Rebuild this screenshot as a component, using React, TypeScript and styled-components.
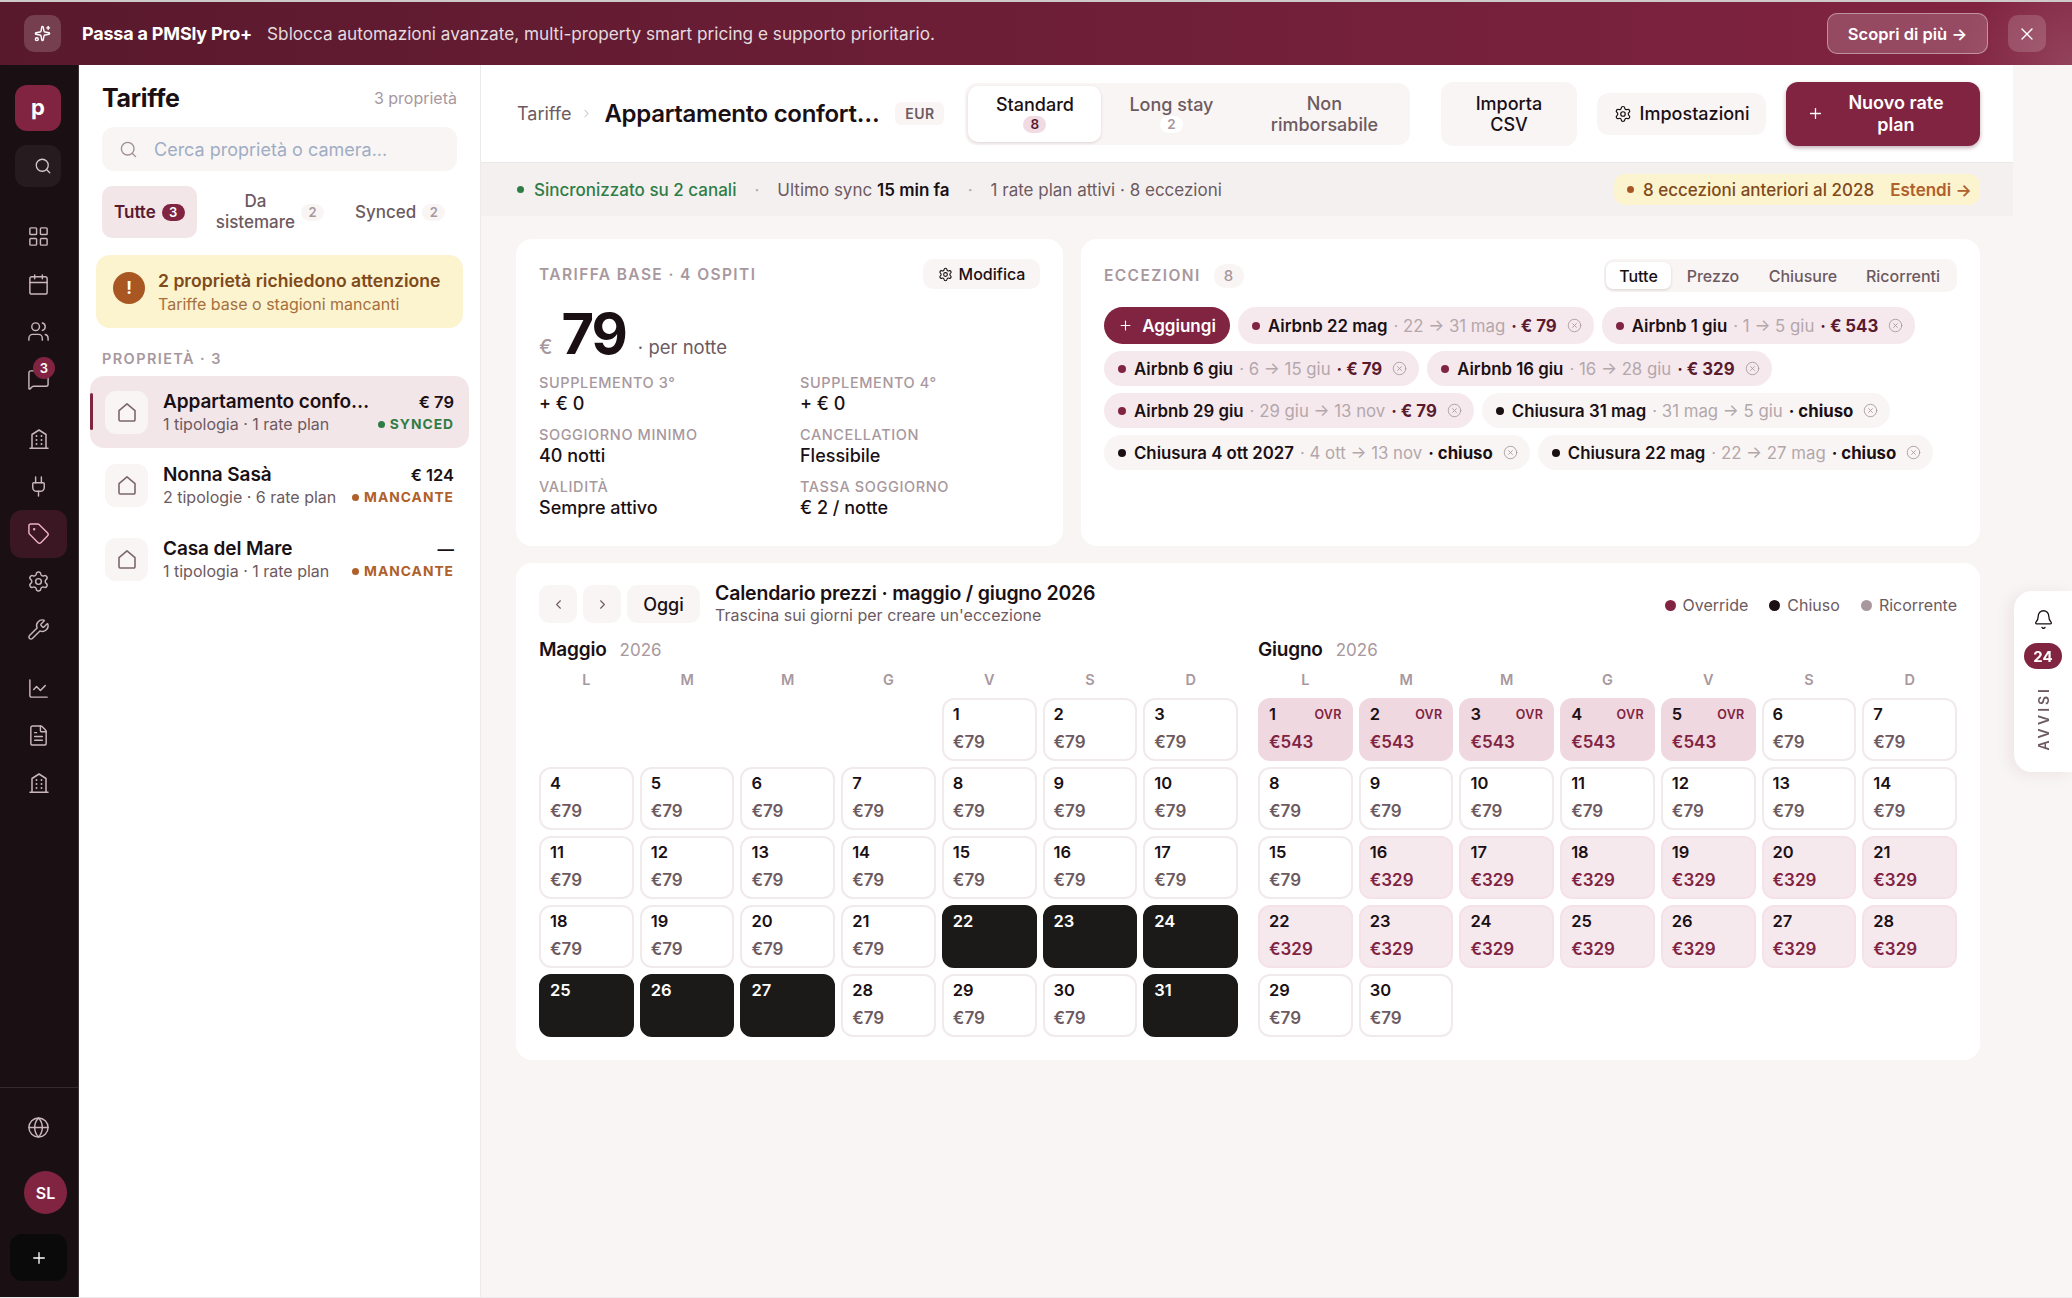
import { ReactNode } from "react";
import styled, { createGlobalStyle } from "styled-components";
import {
  Bell, Calendar, ChartLine, ChevronLeft, ChevronRight, CircleX, FileText, Globe, LayoutGrid,
  MessageSquare, Plug, Plus, Search, Settings, Sparkles, Tag, Users, Wrench, X,
} from "lucide-react";

const wine = "#802442";
const deepWine = "#5a1a2e";
const ink = "#1a1014";
const soft = "#6d5a60";
const muted = "#a8989e";
const paper = "#f9f5f4";
const blush = "#f3e6e9";

const GlobalStyle = createGlobalStyle`
  html, body, #root { height: 100%; margin: 0; }
  body { font-family: Inter, "Liberation Sans", sans-serif; color: ${ink}; background: #fff; overflow: hidden; }
  * { box-sizing: border-box; }
`;

const Root = styled.div`
  height: 100vh;
  display: flex;
  flex-direction: column;
  border-top: 2px solid #cfcaca;
  border-bottom: 1px solid #eee9ea;
`;

/* banner */
const Banner = styled.div`
  height: 63px;
  flex: none;
  display: flex;
  align-items: center;
  padding: 0 26px 0 24px;
  color: #fff;
  background:
    radial-gradient(circle at 100% 100%, rgba(255,255,255,.14), rgba(255,255,255,0) 110px),
    linear-gradient(90deg, #59192d, #822442);
`;
const BannerIcon = styled.div`
  width: 37px;
  height: 37px;
  border-radius: 10px;
  background: rgba(255,255,255,.17);
  display: flex;
  align-items: center;
  justify-content: center;
  margin-right: 21px;
`;
const BannerTitle = styled.span`
  font-size: 18px;
  font-weight: 700;
  margin-right: 15px;
  letter-spacing: -.2px;
`;
const BannerText = styled.span`
  font-size: 17.2px;
  color: rgba(255,255,255,.85);
`;
const BannerCta = styled.button`
  margin-left: auto;
  width: 161px;
  height: 41px;
  border-radius: 10px;
  border: 1.5px solid rgba(255,255,255,.4);
  background: rgba(255,255,255,.18);
  color: #fff;
  font: 600 16.5px Inter, sans-serif;
`;
const BannerClose = styled.button`
  margin-left: 20px;
  width: 38px;
  height: 37px;
  border: 0;
  border-radius: 10px;
  background: rgba(255,255,255,.16);
  color: #fff;
  display: flex;
  align-items: center;
  justify-content: center;
`;

const Body = styled.div`
  flex: 1;
  min-height: 0;
  display: flex;
`;

/* icon rail */
const Rail = styled.nav`
  width: 79px;
  flex: none;
  background: #1a1014;
  border-right: 1px solid #3b3236;
  display: flex;
  flex-direction: column;
  color: #c9b6bc;
  padding-top: 20px;
`;
const RailLogo = styled.div`
  width: 46px;
  height: 46px;
  margin: 0 0 14px 15px;
  border-radius: 12px;
  background: ${wine};
  color: #fff;
  font-size: 22px;
  font-weight: 700;
  display: flex;
  align-items: center;
  justify-content: center;
  padding-bottom: 3px;
`;
const RailSearch = styled.div`
  width: 46px;
  height: 42px;
  margin: 0 0 26px 15px;
  border-radius: 12px;
  background: #261c20;
  color: #d7c8cd;
  display: flex;
  align-items: center;
  padding-left: 19px;
`;
const RailGroup = styled.div`
  display: flex;
  flex-direction: column;
  margin-bottom: 11.5px;
`;
const RailItem = styled.div<{ $active?: boolean }>`
  position: relative;
  width: 57px;
  height: 47.6px;
  margin-left: 10px;
  border-radius: 12px;
  display: flex;
  align-items: center;
  justify-content: center;
  background: ${p => (p.$active ? "#3a1722" : "transparent")};
  color: ${p => (p.$active ? "#eeb1c4" : "inherit")};
`;
const RailBadge = styled.span`
  position: absolute;
  left: 23px;
  top: 1px;
  width: 22px;
  height: 22px;
  border-radius: 50%;
  background: ${wine};
  color: #fff;
  font-size: 13px;
  font-weight: 600;
  display: flex;
  align-items: center;
  justify-content: center;
`;
const RailFoot = styled.div`
  margin-top: auto;
  border-top: 1px solid #352b2f;
  display: flex;
  flex-direction: column;
  align-items: flex-start;
  padding: 15px 0 16px;
`;
const RailAvatar = styled.div`
  width: 43px;
  height: 43px;
  border-radius: 50%;
  margin: 20px 0 20px 24px;
  background: ${wine};
  color: #fff;
  font-size: 16px;
  font-weight: 600;
  display: flex;
  align-items: center;
  justify-content: center;
`;
const RailAdd = styled.div`
  width: 57px;
  height: 47px;
  margin-left: 10px;
  border-radius: 12px;
  background: #0a0a0a;
  color: #fff;
  display: flex;
  align-items: center;
  justify-content: center;
`;

/* property list */
const ListPanel = styled.aside`
  width: 402px;
  flex: none;
  background: #fff;
  border-right: 1px solid #eee9ea;
  padding: 17px 11px 0;
`;
const ListHead = styled.div`
  display: flex;
  align-items: center;
  justify-content: space-between;
  margin: 0 12px 13px;
  height: 32px;
`;
const ListTitle = styled.h1`
  margin: 0;
  font-size: 25px;
  font-weight: 700;
  letter-spacing: -.3px;
`;
const ListCount = styled.span`
  font-size: 16px;
  color: ${muted};
`;
const SearchBox = styled.div`
  height: 44px;
  margin: 0 12px 15px;
  border-radius: 12px;
  background: ${paper};
  display: flex;
  align-items: center;
  padding-left: 17px;
  gap: 16px;
  color: #a08f95;
`;
const SearchHint = styled.span`
  font-size: 18px;
  color: #9fadc4;
`;
const FilterRow = styled.div`
  display: flex;
  gap: 7px;
  margin: 0 12px 17px;
`;
const FilterTab = styled.div<{ $active?: boolean }>`
  height: 52px;
  padding: 0 12px;
  border-radius: 10px;
  display: flex;
  align-items: center;
  gap: 6px;
  text-align: center;
  font-size: 17px;
  line-height: 21px;
  font-weight: ${p => (p.$active ? 600 : 500)};
  color: ${p => (p.$active ? deepWine : soft)};
  background: ${p => (p.$active ? blush : "transparent")};
`;
const TabCount = styled.span<{ $active?: boolean }>`
  min-width: 23px;
  height: 17px;
  padding: 0 5px;
  border-radius: 9px;
  display: inline-flex;
  align-items: center;
  justify-content: center;
  font-size: 13px;
  font-weight: 600;
  background: ${p => (p.$active ? wine : paper)};
  color: ${p => (p.$active ? "#fff" : muted)};
`;
const Alert = styled.div`
  margin: 0 6px;
  height: 73px;
  border-radius: 14px;
  background: #fcf3cf;
  display: flex;
  align-items: center;
  gap: 13px;
  padding-left: 17px;
`;
const AlertDot = styled.div`
  width: 32px;
  height: 32px;
  margin-top: -8px;
  border-radius: 50%;
  background: #a85722;
  color: #fff;
  font-weight: 700;
  font-size: 17px;
  display: flex;
  align-items: center;
  justify-content: center;
`;
const AlertTitle = styled.div`
  font-size: 17.6px;
  font-weight: 600;
  color: #7f4a1a;
  line-height: 24px;
`;
const AlertSub = styled.div`
  font-size: 16px;
  color: #a5703e;
  line-height: 22px;
`;
const SectionLabel = styled.div`
  margin: 22px 12px 8px;
  font-size: 14.5px;
  line-height: 18px;
  font-weight: 600;
  letter-spacing: 1.4px;
  color: ${muted};
`;
const PropertyRow = styled.div<{ $active?: boolean }>`
  position: relative;
  height: 72px;
  margin-bottom: 1.5px;
  border-radius: 14px;
  padding: 0 15px;
  display: flex;
  align-items: center;
  background: ${p => (p.$active ? blush : "transparent")};
  &::before {
    content: "";
    display: ${p => (p.$active ? "block" : "none")};
    position: absolute;
    left: 0;
    top: 17px;
    bottom: 18px;
    width: 3px;
    background: ${wine};
    border-radius: 2px;
  }
`;
const HouseBox = styled.div`
  width: 43px;
  height: 43px;
  flex: none;
  border-radius: 11px;
  background: ${paper};
  color: #7b676d;
  display: flex;
  align-items: center;
  justify-content: center;
  margin-right: 15px;
`;
const PropertyText = styled.div`
  flex: 1;
  min-width: 0;
`;
const PropertyName = styled.div`
  font-size: 19px;
  font-weight: 600;
  line-height: 24px;
  letter-spacing: -.1px;
`;
const PropertySub = styled.div`
  font-size: 16px;
  line-height: 21px;
  color: ${soft};
`;
const PropertySide = styled.div`
  text-align: right;
`;
const PropertyPrice = styled.div`
  font-size: 16.5px;
  font-weight: 600;
  line-height: 24px;
`;
const PropertyStatus = styled.div<{ $tone: string }>`
  font-size: 13.8px;
  font-weight: 700;
  letter-spacing: 1px;
  line-height: 21px;
  color: ${p => p.$tone};
  white-space: nowrap;
`;
const Dot = styled.span<{ $color: string; $size?: number }>`
  display: inline-block;
  flex: none;
  width: ${p => p.$size ?? 7}px;
  height: ${p => p.$size ?? 7}px;
  border-radius: 50%;
  background: ${p => p.$color};
`;
const StatusDot = styled(Dot)`
  margin-right: 5px;
  vertical-align: 1px;
`;

/* main */
const Main = styled.main`
  flex: 1;
  min-width: 0;
  background: ${paper};
  padding-right: 59px;
`;
const Header = styled.header`
  height: 98px;
  background: #fff;
  border-bottom: 1px solid #ebe6e7;
  padding: 0 33px 0 36px;
  display: flex;
  align-items: center;
`;
const Crumb = styled.span`
  font-size: 18px;
  color: ${soft};
`;
const CrumbArrow = styled.span`
  display: flex;
  color: #b5a8ac;
  margin: 0 11px 0 9px;
`;
const PageTitle = styled.h2`
  margin: 0;
  font-size: 24px;
  font-weight: 600;
  letter-spacing: -.3px;
  white-space: nowrap;
`;
const CurrencyTag = styled.span`
  margin-left: 16px;
  height: 23px;
  padding: 0 10px;
  border-radius: 6px;
  background: ${paper};
  color: ${soft};
  font-size: 14px;
  font-weight: 600;
  letter-spacing: .4px;
  display: flex;
  align-items: center;
`;
const PlanTabs = styled.div`
  margin-left: 21px;
  height: 62px;
  padding: 3px;
  width: 445px;
  border-radius: 12px;
  background: ${paper};
  display: flex;
`;
const PlanTab = styled.div<{ $active?: boolean; $w: number }>`
  width: ${p => p.$w}px;
  height: 56px;
  border-radius: 10px;
  display: flex;
  flex-direction: column;
  align-items: center;
  justify-content: center;
  text-align: center;
  font-size: 18px;
  line-height: 21px;
  font-weight: 500;
  color: ${p => (p.$active ? ink : soft)};
  background: ${p => (p.$active ? "#fff" : "transparent")};
  box-shadow: ${p => (p.$active ? "0 1px 3px rgba(60,20,30,.14)" : "none")};
`;
const PlanCount = styled.span<{ $active?: boolean }>`
  min-width: 23px;
  height: 17px;
  margin-top: 1px;
  border-radius: 9px;
  display: flex;
  align-items: center;
  justify-content: center;
  font-size: 13.5px;
  font-weight: 600;
  background: ${p => (p.$active ? "#f0dbe2" : "#fff")};
  color: ${p => (p.$active ? deepWine : muted)};
`;
const Actions = styled.div`
  margin-left: auto;
  display: flex;
  align-items: center;
  gap: 20px;
`;
const GhostButton = styled.button<{ $h: number; $w: number }>`
  width: ${p => p.$w}px;
  height: ${p => p.$h}px;
  border: 0;
  border-radius: 12px;
  background: ${paper};
  color: ${ink};
  font: 500 18px/21px Inter, sans-serif;
  display: flex;
  align-items: center;
  justify-content: center;
  gap: 8px;
`;
const PrimaryButton = styled.button`
  width: 194px;
  height: 64px;
  border: 0;
  border-radius: 12px;
  background: ${wine};
  color: #fff;
  font: 600 18px/22px Inter, sans-serif;
  box-shadow: 0 2px 4px rgba(90,26,46,.35);
  display: flex;
  align-items: center;
  padding-left: 21px;
`;
const PrimaryLabel = styled.span`
  flex: 1;
  text-align: center;
  padding-right: 6px;
`;
const SyncBar = styled.div`
  height: 53px;
  background: #f4f0f0;
  padding: 0 33px 0 36px;
  display: flex;
  align-items: center;
  font-size: 17px;
  color: ${soft};
`;
const SyncOk = styled.span`
  display: flex;
  align-items: center;
  gap: 10px;
  font-weight: 500;
  color: #2f7d46;
`;
const SyncSep = styled.span`
  margin: 0 18px;
  color: #b5a8ac;
`;
const Strong = styled.strong`
  font-weight: 600;
  color: ${ink};
`;
const WarnPill = styled.div`
  margin-left: auto;
  height: 31px;
  width: 366px;
  border-radius: 11px;
  background: #fcf3cf;
  color: #7f4a1a;
  font-weight: 500;
  display: flex;
  align-items: center;
  gap: 9px;
  padding-left: 13px;
`;
const WarnLink = styled.span`
  margin-left: 7px;
  font-weight: 600;
  color: #b0602a;
`;
const Content = styled.div`
  padding: 23px 33px 0 35px;
  display: flex;
  flex-direction: column;
  gap: 17px;
`;
const TopCards = styled.div`
  display: grid;
  grid-template-columns: 547px 1fr;
  gap: 18px;
`;
const Card = styled.section`
  background: #fff;
  border-radius: 16px;
`;
const RateCard = styled(Card)`
  height: 307px;
  padding: 20px 23px;
`;
const RateHead = styled.div`
  display: flex;
  align-items: center;
  justify-content: space-between;
  height: 30px;
`;
const Eyebrow = styled.span`
  font-size: 15.5px;
  font-weight: 600;
  letter-spacing: 1.4px;
  color: ${muted};
`;
const SmallButton = styled.button`
  width: 117px;
  height: 30px;
  border: 0;
  border-radius: 10px;
  background: ${paper};
  color: ${ink};
  font: 500 16px Inter, sans-serif;
  display: flex;
  align-items: center;
  justify-content: center;
  gap: 6px;
`;
const PriceRow = styled.div`
  display: flex;
  align-items: baseline;
  margin-top: 13px;
  height: 65px;
`;
const PriceCurrency = styled.span`
  font-size: 20px;
  font-weight: 500;
  color: ${muted};
  margin-right: 9px;
`;
const PriceValue = styled.span`
  font-size: 56px;
  line-height: 65px;
  font-weight: 700;
  letter-spacing: -2px;
  margin-right: 12px;
`;
const PriceUnit = styled.span`
  font-size: 18.5px;
  color: ${soft};
`;
const FactGrid = styled.div`
  margin-top: 6px;
  display: grid;
  grid-template-columns: 261px 1fr;
  row-gap: 10px;
`;
const FactLabel = styled.div`
  font-size: 14.5px;
  line-height: 20px;
  font-weight: 500;
  letter-spacing: .6px;
  color: ${muted};
`;
const FactValue = styled.div`
  font-size: 18px;
  line-height: 22px;
  font-weight: 500;
`;
const ExceptionsCard = styled(Card)`
  height: 307px;
  padding: 20px 23px;
`;
const ExceptionsHead = styled.div`
  display: flex;
  align-items: center;
  height: 33px;
  margin-bottom: 15px;
`;
const CountBubble = styled.span`
  margin-left: 13px;
  width: 30px;
  height: 24px;
  border-radius: 12px;
  background: ${paper};
  color: ${muted};
  font-size: 15px;
  font-weight: 500;
  display: flex;
  align-items: center;
  justify-content: center;
`;
const Segments = styled.div`
  margin-left: auto;
  height: 33px;
  padding: 3px 2px;
  border-radius: 10px;
  background: ${paper};
  display: flex;
`;
const Segment = styled.div<{ $active?: boolean; $w: number }>`
  width: ${p => p.$w}px;
  border-radius: 7px;
  display: flex;
  align-items: center;
  justify-content: center;
  font-size: 16px;
  font-weight: 500;
  color: ${p => (p.$active ? ink : soft)};
  background: ${p => (p.$active ? "#fff" : "transparent")};
  box-shadow: ${p => (p.$active ? "0 1px 3px rgba(60,20,30,.16)" : "none")};
`;
const Chips = styled.div`
  display: flex;
  flex-wrap: wrap;
  gap: 7px 8px;
`;
const AddChip = styled.button`
  height: 37px;
  width: 126px;
  border: 0;
  border-radius: 19px;
  background: ${wine};
  color: #fff;
  font: 600 17px Inter, sans-serif;
  display: flex;
  align-items: center;
  justify-content: center;
  gap: 9px;
`;
const Chip = styled.div<{ $closed?: boolean }>`
  height: 35px;
  padding: 0 12px 0 14px;
  border-radius: 18px;
  display: flex;
  align-items: center;
  white-space: nowrap;
  font-size: 16.8px;
  background: ${p => (p.$closed ? paper : "#f6e9ee")};
  &:nth-child(2), &:nth-child(3) { height: 37px; }
`;
const ChipName = styled.span`
  margin-left: 8px;
  font-weight: 600;
`;
const ChipDates = styled.span`
  margin-left: 6px;
  color: #b3a7ab;
`;
const ChipValue = styled.span<{ $closed?: boolean }>`
  margin: 0 10px 0 6px;
  font-weight: 700;
  color: ${p => (p.$closed ? ink : deepWine)};
`;
const ChipClose = styled.span`
  display: flex;
  color: #a8989e;
`;

/* calendar */
const CalendarCard = styled(Card)`
  height: 497px;
  padding: 22px 23px 0;
`;
const CalendarBar = styled.div`
  display: flex;
  align-items: center;
  height: 38px;
  margin-bottom: 15px;
`;
const NavButton = styled.button`
  width: 38px;
  height: 38px;
  border: 0;
  border-radius: 10px;
  background: ${paper};
  color: ${soft};
  margin-right: 6px;
  display: flex;
  align-items: center;
  justify-content: center;
  padding: 0;
`;
const TodayButton = styled.button`
  width: 73px;
  height: 38px;
  border: 0;
  border-radius: 10px;
  background: ${paper};
  color: ${ink};
  font: 500 18px Inter, sans-serif;
  margin-right: 15px;
`;
const CalendarTitle = styled.div`
  font-size: 19.5px;
  font-weight: 600;
  line-height: 22px;
  letter-spacing: -.2px;
`;
const CalendarSub = styled.div`
  font-size: 16px;
  line-height: 22px;
  color: ${soft};
`;
const Legend = styled.div`
  margin-left: auto;
  margin-top: 2px;
  display: flex;
  gap: 21px;
  font-size: 16px;
  color: ${soft};
`;
const LegendItem = styled.span`
  display: flex;
  align-items: center;
  gap: 7px;
`;
const Months = styled.div`
  display: grid;
  grid-template-columns: 1fr 1fr;
  column-gap: 20px;
`;
const MonthHead = styled.div`
  height: 24px;
  display: flex;
  align-items: baseline;
  gap: 13px;
`;
const MonthName = styled.span`
  font-size: 19px;
  font-weight: 600;
  letter-spacing: -.2px;
`;
const MonthYear = styled.span`
  font-size: 17px;
  color: ${muted};
`;
const DayGrid = styled.div`
  display: grid;
  grid-template-columns: repeat(7, 1fr);
  grid-auto-rows: 63px;
  gap: 6px;
  margin-top: 36px;
  position: relative;
`;
const WeekHead = styled.div`
  display: grid;
  grid-template-columns: repeat(7, 1fr);
  gap: 6px;
  margin: 8px 0 -28px;
  height: 20px;
  text-align: center;
  font-size: 14.5px;
  line-height: 20px;
  font-weight: 600;
  color: ${muted};
`;
const Cell = styled.div<{ $kind: string }>`
  border-radius: 12px;
  border: 2px solid ${p =>
    p.$kind === "plain" ? "#f1eaec" : p.$kind === "soft" ? "#f5e2e9" : p.$kind === "strong" ? "#f0d8e0" : "#1c1a18"};
  background: ${p =>
    p.$kind === "plain" ? "#fff" : p.$kind === "soft" ? "#f6e9ee" : p.$kind === "strong" ? "#f0d8e0" : "#1c1a18"};
  padding: 4px 9px 6px;
`;
const CellTop = styled.div`
  display: flex;
  justify-content: space-between;
  align-items: center;
  height: 20px;
  margin-bottom: 7px;
`;
const DayNumber = styled.span<{ $closed?: boolean }>`
  font-size: 16.5px;
  font-weight: 600;
  color: ${p => (p.$closed ? "#fff" : ink)};
`;
const OvrTag = styled.span`
  font-size: 12.5px;
  font-weight: 600;
  letter-spacing: .3px;
  color: ${wine};
`;
const CellPrice = styled.div<{ $kind: string }>`
  font-size: 17px;
  line-height: 22px;
  font-weight: 600;
  color: ${p => (p.$kind === "plain" ? soft : wine)};
`;

/* floating tab */
const Notices = styled.div`
  position: fixed;
  right: 0;
  top: 591px;
  width: 58px;
  height: 181px;
  background: #fff;
  border-radius: 18px 0 0 18px;
  box-shadow: -4px 2px 16px rgba(60,20,30,.07);
  display: flex;
  flex-direction: column;
  align-items: center;
  padding-top: 18px;
`;
const NoticesBadge = styled.span`
  width: 38px;
  height: 26px;
  margin: 13px 0 17px;
  border-radius: 13px;
  background: ${wine};
  color: #fff;
  font-size: 15px;
  font-weight: 700;
  display: flex;
  align-items: center;
  justify-content: center;
`;
const NoticesLabel = styled.span`
  writing-mode: vertical-rl;
  transform: rotate(180deg);
  font-size: 14px;
  font-weight: 600;
  letter-spacing: 3px;
  color: ${soft};
`;

const BuildingIcon = () => (
  <svg width="22" height="22" viewBox="0 0 22 22" fill="none" stroke="currentColor" strokeWidth="1.5" strokeLinecap="round" strokeLinejoin="round">
    <path d="M4 20V6.5L11 2l7 4.5V20" />
    <path d="M2 20.2h18" />
    <path d="M8.5 8v.01M13.5 8v.01M8.5 12v.01M13.5 12v.01M8.5 16v.01M13.5 16v.01" strokeWidth="1.9" />
  </svg>
);

const HouseIcon = () => (
  <svg width="20" height="21" viewBox="0 0 20 21" fill="none" stroke="currentColor" strokeWidth="1.6" strokeLinejoin="round">
    <path d="M2 8.6 10 1.8l8 6.8v9.2a1.2 1.2 0 0 1-1.2 1.2H3.2A1.2 1.2 0 0 1 2 17.8z" />
  </svg>
);

const railTop = [LayoutGrid, Calendar, Users];
const railMid = [Plug, Tag, Settings, Wrench];

const properties = [
  { name: "Appartamento confo…", sub: "1 tipologia · 1 rate plan", price: "€ 79", status: "SYNCED", tone: "#2f7d46", active: true },
  { name: "Nonna Sasà", sub: "2 tipologie · 6 rate plan", price: "€ 124", status: "MANCANTE", tone: "#b0602a" },
  { name: "Casa del Mare", sub: "1 tipologia · 1 rate plan", price: "—", status: "MANCANTE", tone: "#b0602a" },
];

const facts = [
  ["SUPPLEMENTO 3°", "+ € 0"],
  ["SUPPLEMENTO 4°", "+ € 0"],
  ["SOGGIORNO MINIMO", "40 notti"],
  ["CANCELLATION", "Flessibile"],
  ["VALIDITÀ", "Sempre attivo"],
  ["TASSA SOGGIORNO", "€ 2 / notte"],
];

const exceptions = [
  { name: "Airbnb 22 mag", dates: "· 22 → 31 mag", value: "· € 79" },
  { name: "Airbnb 1 giu", dates: "· 1 → 5 giu", value: "· € 543" },
  { name: "Airbnb 6 giu", dates: "· 6 → 15 giu", value: "· € 79" },
  { name: "Airbnb 16 giu", dates: "· 16 → 28 giu", value: "· € 329" },
  { name: "Airbnb 29 giu", dates: "· 29 giu → 13 nov", value: "· € 79" },
  { name: "Chiusura 31 mag", dates: "· 31 mag → 5 giu", value: "· chiuso", closed: true },
  { name: "Chiusura 4 ott 2027", dates: "· 4 ott → 13 nov", value: "· chiuso", closed: true },
  { name: "Chiusura 22 mag", dates: "· 22 → 27 mag", value: "· chiuso", closed: true },
];

const week = ["L", "M", "M", "G", "V", "S", "D"];

const mayKind = (d: number) => (d >= 22 && d !== 28 && d !== 29 && d !== 30 ? "closed" : "plain");
const juneKind = (d: number) => (d <= 5 ? "strong" : d >= 16 && d <= 28 ? "soft" : "plain");
const junePrice = (d: number) => (d <= 5 ? "€543" : d >= 16 && d <= 28 ? "€329" : "€79");

function Month({ name, blanks, days, kind, price }: {
  name: string;
  blanks: number;
  days: number;
  kind: (d: number) => string;
  price: (d: number) => string;
}) {
  return (
    <div>
      <MonthHead><MonthName>{name}</MonthName><MonthYear>2026</MonthYear></MonthHead>
      <WeekHead>{week.map((w, i) => <span key={i}>{w}</span>)}</WeekHead>
      <DayGrid>
        {Array.from({ length: blanks }, (_, i) => <div key={`b${i}`} />)}
        {Array.from({ length: days }, (_, i) => {
          const d = i + 1;
          const k = kind(d);
          return (
            <Cell key={d} $kind={k}>
              <CellTop>
                <DayNumber $closed={k === "closed"}>{d}</DayNumber>
                {k === "strong" && <OvrTag>OVR</OvrTag>}
              </CellTop>
              {k !== "closed" && <CellPrice $kind={k}>{price(d)}</CellPrice>}
            </Cell>
          );
        })}
      </DayGrid>
    </div>
  );
}

const Rail_ = ({ children, active }: { children: ReactNode; active?: boolean }) => <RailItem $active={active}>{children}</RailItem>;

export default function App() {
  return (
    <Root>
      <GlobalStyle />
      <Banner>
        <BannerIcon><Sparkles size={17} strokeWidth={2} /></BannerIcon>
        <BannerTitle>Passa a PMSly Pro+</BannerTitle>
        <BannerText>Sblocca automazioni avanzate, multi-property smart pricing e supporto prioritario.</BannerText>
        <BannerCta>Scopri di più →</BannerCta>
        <BannerClose><X size={20} strokeWidth={1.6} /></BannerClose>
      </Banner>
      <Body>
        <Rail>
          <RailLogo>p</RailLogo>
          <RailSearch><Search size={18} strokeWidth={1.7} /></RailSearch>
          <RailGroup>
            {railTop.map((Icon, i) => <Rail_ key={i}><Icon size={23} strokeWidth={1.5} /></Rail_>)}
            <Rail_><MessageSquare size={23} strokeWidth={1.5} /><RailBadge>3</RailBadge></Rail_>
          </RailGroup>
          <RailGroup>
            <Rail_><BuildingIcon /></Rail_>
            {railMid.map((Icon, i) => <Rail_ key={i} active={i === 1}><Icon size={23} strokeWidth={1.5} /></Rail_>)}
          </RailGroup>
          <RailGroup>
            <Rail_><ChartLine size={23} strokeWidth={1.5} /></Rail_>
            <Rail_><FileText size={23} strokeWidth={1.5} /></Rail_>
            <Rail_><BuildingIcon /></Rail_>
          </RailGroup>
          <RailFoot>
            <Rail_><Globe size={23} strokeWidth={1.5} /></Rail_>
            <RailAvatar>SL</RailAvatar>
            <RailAdd><Plus size={18} strokeWidth={1.8} /></RailAdd>
          </RailFoot>
        </Rail>

        <ListPanel>
          <ListHead><ListTitle>Tariffe</ListTitle><ListCount>3 proprietà</ListCount></ListHead>
          <SearchBox><Search size={19} strokeWidth={1.7} /><SearchHint>Cerca proprietà o camera...</SearchHint></SearchBox>
          <FilterRow>
            <FilterTab $active>Tutte <TabCount $active>3</TabCount></FilterTab>
            <FilterTab>Da<br />sistemare <TabCount>2</TabCount></FilterTab>
            <FilterTab>Synced <TabCount>2</TabCount></FilterTab>
          </FilterRow>
          <Alert>
            <AlertDot>!</AlertDot>
            <div>
              <AlertTitle>2 proprietà richiedono attenzione</AlertTitle>
              <AlertSub>Tariffe base o stagioni mancanti</AlertSub>
            </div>
          </Alert>
          <SectionLabel>PROPRIETÀ · 3</SectionLabel>
          {properties.map(p => (
            <PropertyRow key={p.name} $active={p.active}>
              <HouseBox><HouseIcon /></HouseBox>
              <PropertyText>
                <PropertyName>{p.name}</PropertyName>
                <PropertySub>{p.sub}</PropertySub>
              </PropertyText>
              <PropertySide>
                <PropertyPrice>{p.price}</PropertyPrice>
                <PropertyStatus $tone={p.tone}><StatusDot $color={p.tone} />{p.status}</PropertyStatus>
              </PropertySide>
            </PropertyRow>
          ))}
        </ListPanel>

        <Main>
          <Header>
            <Crumb>Tariffe</Crumb>
            <CrumbArrow><ChevronRight size={13} strokeWidth={1.6} /></CrumbArrow>
            <PageTitle>Appartamento confort…</PageTitle>
            <CurrencyTag>EUR</CurrencyTag>
            <PlanTabs>
              <PlanTab $active $w={133}>Standard<PlanCount $active>8</PlanCount></PlanTab>
              <PlanTab $w={140}>Long stay<PlanCount>2</PlanCount></PlanTab>
              <PlanTab $w={166}>Non<br />rimborsabile</PlanTab>
            </PlanTabs>
            <Actions>
              <GhostButton $w={136} $h={64}>Importa<br />CSV</GhostButton>
              <GhostButton $w={169} $h={42}><Settings size={18} strokeWidth={1.6} />Impostazioni</GhostButton>
              <PrimaryButton><Plus size={17} strokeWidth={1.8} /><PrimaryLabel>Nuovo rate<br />plan</PrimaryLabel></PrimaryButton>
            </Actions>
          </Header>
          <SyncBar>
            <SyncOk><Dot $color="#2f7d46" />Sincronizzato su 2 canali</SyncOk>
            <SyncSep>·</SyncSep>
            <span>Ultimo sync <Strong>15 min fa</Strong></span>
            <SyncSep>·</SyncSep>
            <span>1 rate plan attivi · 8 eccezioni</span>
            <WarnPill>
              <Dot $color="#a85722" />
              8 eccezioni anteriori al 2028
              <WarnLink>Estendi →</WarnLink>
            </WarnPill>
          </SyncBar>
          <Content>
            <TopCards>
              <RateCard>
                <RateHead>
                  <Eyebrow>TARIFFA BASE · 4 OSPITI</Eyebrow>
                  <SmallButton><Settings size={15} strokeWidth={1.7} />Modifica</SmallButton>
                </RateHead>
                <PriceRow>
                  <PriceCurrency>€</PriceCurrency>
                  <PriceValue>79</PriceValue>
                  <PriceUnit>· per notte</PriceUnit>
                </PriceRow>
                <FactGrid>
                  {facts.map(([label, value]) => (
                    <div key={label}>
                      <FactLabel>{label}</FactLabel>
                      <FactValue>{value}</FactValue>
                    </div>
                  ))}
                </FactGrid>
              </RateCard>
              <ExceptionsCard>
                <ExceptionsHead>
                  <Eyebrow>ECCEZIONI</Eyebrow>
                  <CountBubble>8</CountBubble>
                  <Segments>
                    <Segment $active $w={65}>Tutte</Segment>
                    <Segment $w={84}>Prezzo</Segment>
                    <Segment $w={96}>Chiusure</Segment>
                    <Segment $w={104}>Ricorrenti</Segment>
                  </Segments>
                </ExceptionsHead>
                <Chips>
                  <AddChip><Plus size={15} strokeWidth={1.8} />Aggiungi</AddChip>
                  {exceptions.map(e => (
                    <Chip key={e.name} $closed={e.closed}>
                      <Dot $color={e.closed ? ink : wine} $size={8} />
                      <ChipName>{e.name}</ChipName>
                      <ChipDates>{e.dates}</ChipDates>
                      <ChipValue $closed={e.closed}>{e.value}</ChipValue>
                      <ChipClose><CircleX size={15} strokeWidth={1.4} /></ChipClose>
                    </Chip>
                  ))}
                </Chips>
              </ExceptionsCard>
            </TopCards>
            <CalendarCard>
              <CalendarBar>
                <NavButton><ChevronLeft size={15} strokeWidth={1.7} /></NavButton>
                <NavButton><ChevronRight size={15} strokeWidth={1.7} /></NavButton>
                <TodayButton>Oggi</TodayButton>
                <div>
                  <CalendarTitle>Calendario prezzi · maggio / giugno 2026</CalendarTitle>
                  <CalendarSub>Trascina sui giorni per creare un'eccezione</CalendarSub>
                </div>
                <Legend>
                  <LegendItem><Dot $color={wine} $size={11} />Override</LegendItem>
                  <LegendItem><Dot $color={ink} $size={11} />Chiuso</LegendItem>
                  <LegendItem><Dot $color={muted} $size={11} />Ricorrente</LegendItem>
                </Legend>
              </CalendarBar>
              <Months>
                <Month name="Maggio" blanks={4} days={31} kind={mayKind} price={() => "€79"} />
                <Month name="Giugno" blanks={0} days={30} kind={juneKind} price={junePrice} />
              </Months>
            </CalendarCard>
          </Content>
        </Main>
      </Body>
      <Notices>
        <Bell size={21} strokeWidth={1.5} />
        <NoticesBadge>24</NoticesBadge>
        <NoticesLabel>AVVISI</NoticesLabel>
      </Notices>
    </Root>
  );
}
